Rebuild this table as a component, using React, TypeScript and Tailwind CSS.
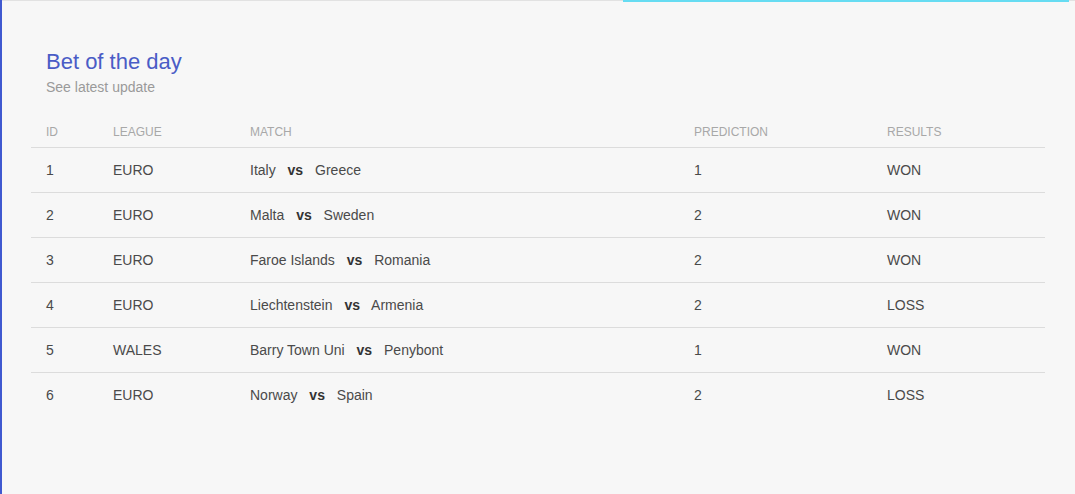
import React from 'react';

const rows = [
  { id: 1, league: 'EURO', home: 'Italy', away: 'Greece', prediction: '1', result: 'WON' },
  { id: 2, league: 'EURO', home: 'Malta', away: 'Sweden', prediction: '2', result: 'WON' },
  { id: 3, league: 'EURO', home: 'Faroe Islands', away: 'Romania', prediction: '2', result: 'WON' },
  { id: 4, league: 'EURO', home: 'Liechtenstein', away: 'Armenia', prediction: '2', result: 'LOSS' },
  { id: 5, league: 'WALES', home: 'Barry Town Uni', away: 'Penybont', prediction: '1', result: 'WON' },
  { id: 6, league: 'EURO', home: 'Norway', away: 'Spain', prediction: '2', result: 'LOSS' },
];

const columns = ['ID', 'LEAGUE', 'MATCH', 'PREDICTION', 'RESULTS'];
const widths = ['w-[67px]', 'w-[137px]', 'w-[444px]', 'w-[193px]', 'w-[173px]'];

export default function App() {
  return (
    <div className="relative h-[494px] w-[1075px] overflow-hidden bg-[#f7f7f7] font-['Liberation_Sans',Arial,sans-serif]">
      {/* top rule with the progress strip */}
      <div className="flex h-[2px]">
        <div className="w-[623px] border-t border-[#e2e2e2]" />
        <div className="h-[2px] w-[446px] bg-[#66dcf2]" />
        <div className="flex-1 border-t border-[#e2e2e2]" />
      </div>
      <div className="absolute left-0 top-0 h-full w-[2px] bg-[#4059d0]" />

      <div className="pl-[31px] pr-[30px] pt-[47px]">
        <div className="pl-[15px]">
          <h2 className="text-[22px] leading-[26px] text-[#4a5cc6]">Bet of the day</h2>
          <p className="mt-[4px] text-[14px] leading-[17px] text-[#9a9a9a]">See latest update</p>
        </div>

        <table className="mt-[22px] w-[1014px] table-fixed border-collapse">
          <thead>
            <tr className="border-b border-[#dcdcdc]">
              {columns.map((c, i) => (
                <th
                  key={c}
                  className={`${widths[i]} px-[15px] pb-[8px] pt-[7px] text-left text-[12px] font-normal leading-[14px] text-[#a8a8a8]`}
                >
                  {c}
                </th>
              ))}
            </tr>
          </thead>
          <tbody>
            {rows.map((r, i) => (
              <tr key={r.id} className={i < rows.length - 1 ? 'border-b border-[#dcdcdc]' : ''}>
                <td className="h-[45px] px-[15px] text-[14px] text-[#4a4a4a]">{r.id}</td>
                <td className="h-[45px] px-[15px] text-[14px] text-[#4a4a4a]">{r.league}</td>
                <td className="h-[45px] px-[15px] text-[14px] text-[#4a4a4a]">
                  {r.home} <b className="mx-2 font-bold text-[#333]">vs</b> {r.away}
                </td>
                <td className="h-[45px] px-[15px] text-[14px] text-[#4a4a4a]">{r.prediction}</td>
                <td className="h-[45px] px-[15px] text-[14px] text-[#4a4a4a]">{r.result}</td>
              </tr>
            ))}
          </tbody>
        </table>
      </div>
    </div>
  );
}
